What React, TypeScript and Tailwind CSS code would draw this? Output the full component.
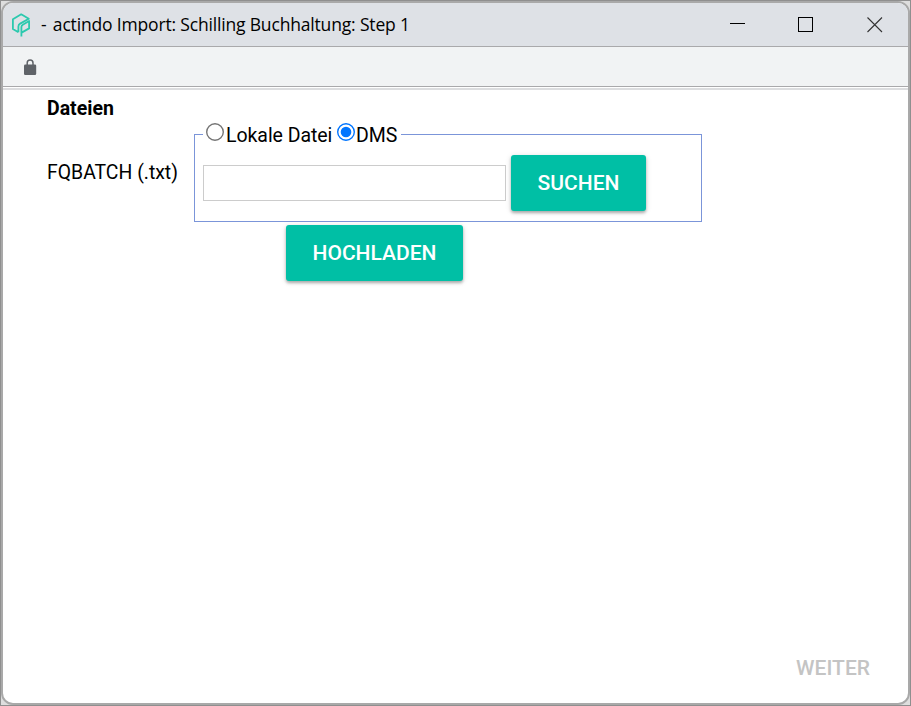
import React from "react";

const font = "font-['Roboto',sans-serif]";

function Radio({ checked = false }: { checked?: boolean }) {
  return (
    <svg className="block h-[18px] w-[18px] shrink-0" viewBox="0 0 18 18" role="radio" aria-checked={checked}>
      <circle cx="9" cy="9" r="8.3" fill="#fff" stroke={checked ? "#0075ff" : "#767676"} strokeWidth="1.4" />
      {checked && <circle cx="9" cy="9" r="5.3" fill="#0075ff" />}
    </svg>
  );
}

function ActionButton({ label, className }: { label: string; className: string }) {
  return (
    <button
      className={`flex h-14 shrink-0 items-center justify-center rounded-[3px] bg-[#00bfa5] text-[21px] font-medium text-white shadow-[0_2px_3px_rgba(0,0,0,0.28),0_1px_6px_rgba(0,0,0,0.12)] ${className}`}
    >
      {label}
    </button>
  );
}

function TitleBar() {
  return (
    <header className="flex h-[44px] shrink-0 items-center border-b border-[#a9a9ab] bg-[#dee1e6]">
      <svg className="ml-[8px] mt-px h-6 w-5 shrink-0" viewBox="0 0 20 24" fill="none" stroke="#2bc9ae" strokeWidth="1.8" strokeLinejoin="round">
        <path d="M7.4 19.2 L1.9 16 V6.2 L10.2 1.3 L17.8 5.7 L9.2 10.6 Q7.4 11.7 7.4 13.6 V19.2" />
        <path d="M10.4 23.4 V14 Q10.4 12.5 11.8 11.7 L18.1 8 V15.4 L10.6 19.6" />
      </svg>
      <h1 className="ml-[10px] mb-[1px] whitespace-nowrap font-['Open_Sans','Noto_Sans',sans-serif] text-[17.5px] leading-6 font-normal tracking-[-0.17px] text-black">
        <span className="mr-[2px]">-</span> actindo Import: Schilling Buchhaltung: Step 1
      </h1>
      <div className="ml-auto mr-[25px] flex items-center">
        <svg className="mr-[52px] h-4 w-4" viewBox="0 0 16 16" shapeRendering="crispEdges">
          <path d="M0 6.5H15" stroke="#000" />
        </svg>
        <svg className="mr-[53px] h-4 w-4" viewBox="0 0 16 16" fill="none" shapeRendering="crispEdges">
          <path d="M.5 .5H14.5V14.5H.5Z" stroke="#000" />
        </svg>
        <svg className="h-4 w-4" viewBox="0 0 16 16">
          <path d="M.5 .5L15 15M15 .5L.5 15" stroke="#333" strokeWidth="1.1" />
        </svg>
      </div>
    </header>
  );
}

export default function App() {
  return (
    <div className={`h-[706px] w-[911px] overflow-hidden border border-[#8f8f8f] bg-[#dedede] ${font} text-[20px] leading-6 text-black`}>
      <div className="flex h-[704px] w-[909px] flex-col overflow-hidden rounded-[12px] border-2 border-[#a9a9a9] bg-white">
        <TitleBar />
        <div className="flex h-10 shrink-0 items-center border-b border-[#a9a9ab] bg-[#f1f3f4] pl-[21px]">
          <svg className="mt-px h-4 w-[13px]" viewBox="0 0 13 16">
            <path d="M3.2 6V4a2.9 2.9 0 0 1 5.8 0V6" fill="none" stroke="#5f6368" strokeWidth="1.5" />
            <rect y="5.5" width="12.2" height="10.5" rx="1.3" fill="#5f6368" />
          </svg>
        </div>
        <div className="mt-px h-[2px] shrink-0 bg-[#dcdddf]" />
        <main className="flex min-h-0 flex-1 flex-col pl-[44px]">
          <h2 className="mt-[7px] h-6 text-[19.5px] font-bold">Dateien</h2>
          <div className="mt-[2px] flex h-[99px]">
            <label className="w-[147px] shrink-0 pt-[38px] whitespace-nowrap text-[19.4px]">FQBATCH (.txt)</label>
            <fieldset className="-mt-px h-[100px] w-[508px] border border-[#7b95d9] pl-[8px]">
              <legend className="flex h-[24px] w-[198px] items-center whitespace-nowrap pl-[3px] text-[19.5px]">
                <span className="mb-[5px]"><Radio /></span>
                <span className="mt-[4px] w-[113px] pl-[2px] tracking-[-0.05px]">Lokale Datei</span>
                <span className="mb-[5px]"><Radio checked /></span>
                <span className="mt-[4px] pl-[1px]">DMS</span>
              </legend>
              <div className="mt-[9px] flex items-center gap-[5px]">
                <input className="h-9 w-[303px] border border-[#cccccc] bg-white px-2 outline-none" />
                <ActionButton label="SUCHEN" className="w-[135px]" />
              </div>
            </fieldset>
          </div>
          <ActionButton label="HOCHLADEN" className="mt-[3px] ml-[239px] w-[177px]" />
          <div className="mt-auto mr-[38px] mb-[23px] self-end text-[21px] font-medium text-[#c4c4c4]">WEITER</div>
        </main>
      </div>
    </div>
  );
}
